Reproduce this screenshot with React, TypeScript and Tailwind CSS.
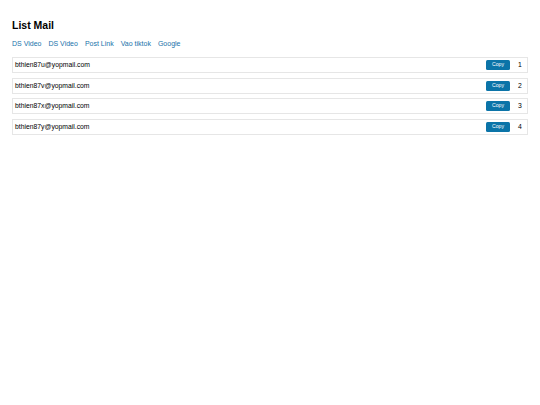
const links = ['DS Video', 'DS Video', 'Post Link', 'Vao tiktok', 'Google'];

const mails = [
  'bthien87u@yopmail.com',
  'bthien87v@yopmail.com',
  'bthien87x@yopmail.com',
  'bthien87y@yopmail.com',
];

export default function App() {
  return (
    <div className="min-h-screen bg-white px-3 pt-[17px] font-['Liberation_Sans',Arial,sans-serif] text-black">
      <h1 className="text-[10.5px] font-bold leading-[16px]">List Mail</h1>

      {/* Nav links */}
      <div className="mt-[6px] flex gap-[7px] text-[7px] leading-[10px] text-[#1872aa]">
        {links.map((l, i) => (
          <a key={i} href="#" className="hover:underline">
            {l}
          </a>
        ))}
      </div>

      {/* Mail rows */}
      <div className="mt-[8px] flex flex-col gap-[4.7px]">
        {mails.map((m, i) => (
          <div
            key={m}
            className="flex h-[16px] items-center border border-[#e6e6e6] pl-[2px] pr-[5px] text-[6.8px]"
          >
            <span className="flex-1">{m}</span>
            <button className="flex h-[10px] w-[24px] items-center justify-center rounded-[1.5px] bg-[#0b74a8] text-[5.2px] text-white">
              Copy
            </button>
            <span className="ml-[8px] w-[4px] text-[6.8px]">{i + 1}</span>
          </div>
        ))}
      </div>
    </div>
  );
}
